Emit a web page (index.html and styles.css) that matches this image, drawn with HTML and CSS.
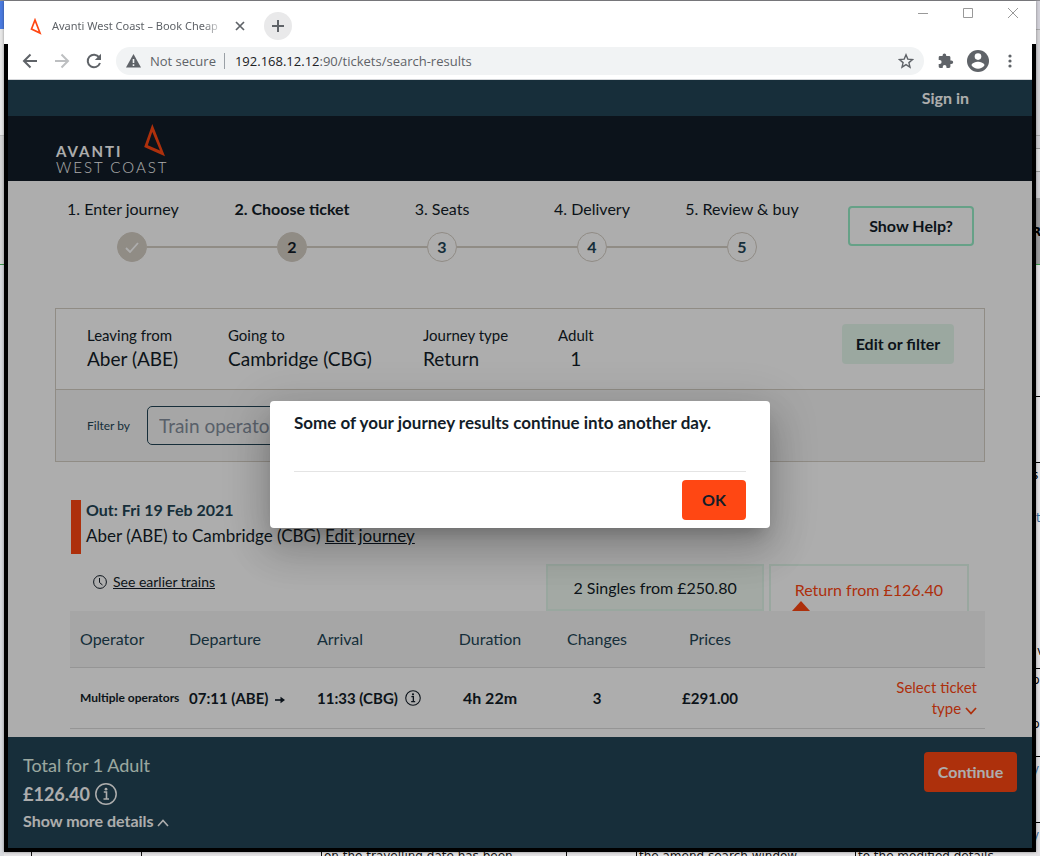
FILE: index.html
```html
<!DOCTYPE html>
<html lang="en">
<head>
<meta charset="utf-8">
<title>Avanti West Coast – Book Cheap</title>
<link rel="stylesheet" href="styles.css">
</head>
<body>
<div class="desktop-doc" aria-hidden="true">
  <div class="edge edge-left"></div>
  <div class="edge edge-right">
    <span class="bit b1">R</span><span class="bit b2">s</span><span class="bit b3">t</span><span class="bit b4">v</span><span class="bit b5">p</span><span class="bit b6">p</span><span class="bit b7">y</span><span class="bit b8">y</span>
  </div>
  <div class="doc-row">
    <span class="c1"></span><span class="c2"></span><span class="c3">on the travelling date has been</span><span class="c4"></span><span class="c5">the amend search window</span><span class="c6">to the modified details</span>
  </div>
</div>

<div class="window">
  <div class="titlebar">
    <div class="tab">
      <svg class="fav" viewBox="0 0 12 17"><path d="M5 2 1.5 11 10 15z" fill="none" stroke="#ff4713" stroke-width="1.7"/></svg>
      <span class="tab-title">Avanti West Coast – Book Cheap</span>
      <button class="plain" aria-label="Close tab"><svg width="10" height="10" viewBox="0 0 10 10"><path d="M1 1l8 8M9 1 1 9" stroke="#5f6368" stroke-width="1.7"/></svg></button>
    </div>
    <button class="new-tab" aria-label="New tab"><svg width="12" height="12" viewBox="0 0 12 12"><path d="M6 0v12M0 6h12" stroke="#5f6368" stroke-width="2"/></svg></button>
    <div class="win-controls">
      <button class="plain" aria-label="Minimise"><svg width="10" height="10" viewBox="0 0 10 10"><path d="M0 5.5h10" stroke="#999"/></svg></button>
      <button class="plain" aria-label="Maximise"><svg width="10" height="10" viewBox="0 0 10 10"><path d="M.5.5h9v9h-9z" fill="none" stroke="#999"/></svg></button>
      <button class="plain" aria-label="Close"><svg width="10" height="10" viewBox="0 0 10 10"><path d="M0 0l10 10M10 0 0 10" stroke="#999"/></svg></button>
    </div>
  </div>

  <div class="frame">
    <div class="toolbar">
      <button class="plain" aria-label="Back"><svg width="16" height="16" viewBox="0 0 16 16"><path d="M15 8H2M8.500 1.500 2 8l6.500 6.500" fill="none" stroke="#5f6368" stroke-width="2"/></svg></button>
      <button class="plain" aria-label="Forward"><svg width="16" height="16" viewBox="0 0 16 16"><path d="M1 8h13M7.500 1.500 14 8l-6.500 6.500" fill="none" stroke="#bdbfc1" stroke-width="2"/></svg></button>
      <button class="plain" aria-label="Reload"><svg width="16" height="16" viewBox="0 0 16 16"><path d="M13.200 4.300A6.300 6.300 0 1 0 14 10" fill="none" stroke="#5f6368" stroke-width="2"/><path d="M15 .800V7H8.800z" fill="#5f6368"/></svg></button>
      <div class="address">
        <svg width="15" height="14" viewBox="0 0 15 14"><path d="M7.500 0 15 13.500H0z" fill="#5f6368"/><path d="M7.500 5v4M7.500 10.300v1.700" stroke="#f1f3f4" stroke-width="1.600"/></svg>
        <span class="secure">Not secure</span>
        <span class="url"><b>192.168.12.12</b>:90/tickets/search-results</span>
        <svg class="star" width="16" height="16" viewBox="0 0 16 16"><path d="M8 1.800l1.800 4.300 4.700.4-3.600 3.100 1.100 4.600L8 11.700l-4 2.500 1.100-4.600L1.500 6.500l4.700-.4z" fill="none" stroke="#5f6368" stroke-width="1.400"/></svg>
      </div>
      <svg class="puzzle" width="16" height="16" viewBox="0 0 16 16"><path d="M13.400 7.400h-1V4.500c0-.8-.6-1.400-1.400-1.400H8.200V2.200a1.800 1.800 0 0 0-3.600 0v.9H2C1.200 3.100.7 3.700.7 4.500v2.600h1a1.900 1.900 0 0 1 0 3.800h-1v2.700c0 .8.500 1.400 1.300 1.400h2.700v-1a1.900 1.900 0 0 1 3.800 0v1H11c.8 0 1.400-.6 1.400-1.400V11h1a1.800 1.800 0 0 0 0-3.600z" fill="#5f6368"/></svg>
      <svg width="22" height="22" viewBox="0 0 22 22"><circle cx="11" cy="11" r="11" fill="#5f6368"/><circle cx="11" cy="6.600" r="3.300" fill="#fff"/><path d="M4.500 15.200c0-2.300 4.300-3.500 6.500-3.500s6.500 1.200 6.500 3.500a7.800 7.800 0 0 1-13 0z" fill="#fff"/></svg>
      <svg class="dots" width="4" height="14" viewBox="0 0 4 14"><g fill="#5f6368"><circle cx="2" cy="2" r="1.600"/><circle cx="2" cy="7" r="1.600"/><circle cx="2" cy="12" r="1.600"/></g></svg>
    </div>

    <div class="page">
      <div class="topbar"><a href="#signin">Sign in</a></div>
      <header class="brand">
        <a class="logo" href="#home">
          <span class="logo-text"><b>AVANTI</b><span>WEST COAST</span></span>
          <svg class="logo-mark" width="24" height="34" viewBox="0 0 24 34"><path d="M9.300 0 1.200 23 22 32.200zM9.300 8 4.800 21.200 17 26.600z" fill="#ff4713" fill-rule="evenodd"/></svg>
        </a>
      </header>

      <main class="content">
        <section class="progress">
          <ol class="steps">
            <li class="first"><span class="label">1. Enter journey</span><span class="rail"><i class="none"></i><span class="dot done"><svg width="14" height="11" viewBox="0 0 14 11"><path d="M1 6l4 4 8-9" fill="none" stroke="#fff" stroke-width="1.800"/></svg></span><i></i></span></li>
            <li class="current"><span class="label">2. Choose ticket</span><span class="rail"><i></i><span class="dot done">2</span><i></i></span></li>
            <li><span class="label">3. Seats</span><span class="rail"><i></i><span class="dot">3</span><i></i></span></li>
            <li><span class="label">4. Delivery</span><span class="rail"><i></i><span class="dot">4</span><i></i></span></li>
            <li><span class="label">5. Review &amp; buy</span><span class="rail"><i></i><span class="dot">5</span><i class="none"></i></span></li>
          </ol>
          <button class="help">Show Help?</button>
        </section>

        <section class="summary">
          <div class="trip">
            <dl>
              <div><dt>Leaving from</dt><dd>Aber (ABE)</dd></div>
              <div><dt>Going to</dt><dd>Cambridge (CBG)</dd></div>
              <div><dt>Journey type</dt><dd>Return</dd></div>
              <div class="adult"><dt>Adult</dt><dd>1</dd></div>
            </dl>
            <button class="edit">Edit or filter</button>
          </div>
          <div class="filter">
            <label for="operator">Filter by</label>
            <input id="operator" type="text" placeholder="Train operator">
          </div>
        </section>

        <section class="results">
          <div class="leg">
            <h2>Out: Fri 19 Feb 2021</h2>
            <p>Aber (ABE) to Cambridge (CBG) <a href="#edit">Edit journey</a></p>
          </div>
          <div class="options">
            <a class="earlier" href="#earlier"><svg width="14" height="14" viewBox="0 0 14 14"><circle cx="7" cy="7" r="6.400" fill="none" stroke="#131d28"/><path d="M6.500 3v4.500L9.500 10" fill="none" stroke="#131d28"/></svg><span>See earlier trains</span></a>
            <div class="fare-tabs">
              <button class="fare">2 Singles from £250.80</button>
              <button class="fare active">Return from £126.40</button>
            </div>
          </div>
          <table>
            <colgroup><col class="w-op"><col class="w-dep"><col class="w-arr"><col class="w-dur"><col class="w-chg"><col class="w-price"><col></colgroup>
            <thead><tr><th>Operator</th><th>Departure</th><th>Arrival</th><th class="mid">Duration</th><th class="mid">Changes</th><th class="mid">Prices</th><th></th></tr></thead>
            <tbody><tr>
              <td class="op">Multiple operators</td>
              <td>07:11 (ABE) <svg class="arrow" width="10" height="8" viewBox="0 0 10 8"><path d="M0 4h7" stroke="#131d28" stroke-width="1.600"/><path d="M5.500.800 10 4 5.500 7.200z" fill="#131d28"/></svg></td>
              <td>11:33 (CBG) <svg class="info" width="16" height="16" viewBox="0 0 22 22"><circle cx="11" cy="11" r="10" fill="none" stroke="#131d28" stroke-width="1.500"/><path d="M8.800 9h2.700v6.500M8.500 16h5.500" fill="none" stroke="#131d28" stroke-width="1.800"/><circle cx="11" cy="6" r="1.500" fill="#131d28"/></svg></td>
              <td class="mid dur">4h 22m</td><td class="mid">3</td><td class="mid">£291.00</td>
              <td class="pick"><a href="#select">Select ticket<br>type <svg width="12" height="8" viewBox="0 0 12 8"><path d="M1 1l5 5.500L11 1" fill="none" stroke="#ff4713" stroke-width="1.800"/></svg></a></td>
            </tr></tbody>
          </table>
        </section>
      </main>

      <footer class="basket">
        <div>
          <p class="who">Total for 1 Adult</p>
          <p class="sum">£126.40 <svg width="22" height="22" viewBox="0 0 22 22"><circle cx="11" cy="11" r="10.200" fill="none" stroke="#fff" stroke-width="1.500"/><path d="M8.800 9h2.700v6.500M8.500 16h5.500" fill="none" stroke="#fff" stroke-width="1.600"/><circle cx="11" cy="6.200" r="1.400" fill="#fff"/></svg></p>
          <a class="more" href="#details">Show more details <svg width="12" height="8" viewBox="0 0 12 8"><path d="M1 7l5-5.500L11 7" fill="none" stroke="#fff" stroke-width="1.600"/></svg></a>
        </div>
        <button class="continue">Continue</button>
      </footer>

      <div class="overlay">
        <div class="modal" role="dialog" aria-modal="true" aria-labelledby="msg">
          <p id="msg">Some of your journey results continue into another day.</p>
          <div class="actions"><button>OK</button></div>
        </div>
      </div>
    </div>
  </div>
</div>
</body>
</html>
```
FILE: styles.css
```css
* { box-sizing: border-box; }
html, body { height: 100%; }
body { margin: 0; background: #e4e3e5; overflow: hidden; font: 16px/24px Lato, "Liberation Sans", sans-serif; color: #131d28; }
button, input { font: inherit; color: inherit; }
button { border: 0; margin: 0; cursor: pointer; }
a { color: inherit; }
p, h2, dl, dd, ol { margin: 0; padding: 0; }
svg { flex: none; }
.plain { background: none; padding: 0; display: flex; }

/* document window lying behind the browser */
.desktop-doc { position: absolute; inset: 0; border-top: 1px solid #8c8c90; }
.edge { position: absolute; top: 0; bottom: 0; width: 4px; }
.edge-left { left: 0; background: linear-gradient(#4b7be0 28px, #e8e8e8 28px 134px, #c0c0c0 134px 135px, #d4d4d4 135px 263px, #3c9a4c 263px 264px, #d8dade 264px); }
.edge-right { right: 0; overflow: hidden; background: linear-gradient(#d2d1d9 28px, #aaa 28px 29px, #d4d3d6 29px 134px, #aaa 134px 135px, #cfced2 135px 147px, #999 147px 148px, #dedddf 148px 170px, #999 170px 171px, #cfced2 171px 197px, #9c9c9e 197px 263px, #3c9a4c 263px 264px, #e2e0e3 264px 395px, #000 395px 396px, #e2e0e3 396px 461px, #000 461px 462px, #e2e0e3 462px 667px, #000 667px 668px, #e2e0e3 668px 755px, #000 755px 756px, #e2e0e3 756px 821px, #000 821px 822px, #e2e0e3 822px); }
.bit { position: absolute; left: -4px; font: 12px/16px "DejaVu Sans", sans-serif; color: #000; }
.b1 { top: 223px; font-weight: 700; } .b2 { top: 466px; } .b3 { top: 509px; left: 0; color: #3b6c9c; } .b4 { top: 642px; left: 1px; }
.b5 { top: 671px; } .b6 { top: 715px; } .b7 { top: 760px; color: #3b6c9c; } .b8 { top: 826px; color: #3b6c9c; }
.doc-row { position: absolute; left: 31px; right: 0; bottom: 0; height: 6px; display: flex; overflow: hidden; font: 12px/12px "DejaVu Sans", sans-serif; color: #111; white-space: nowrap; }
.doc-row span { border-left: 1px solid #111; height: 16px; padding-left: 2px; }
.c1 { width: 110px; } .c2 { width: 180px; } .c3 { width: 245px; } .c4 { width: 70px; } .c5 { width: 219px; } .c6 { flex: 1; }

/* browser window */
.window { position: relative; height: calc(100% - 5px); margin: 1px 4px 4px; display: flex; flex-direction: column; background: #fff; box-shadow: 0 0 3px rgba(0,0,0,.4); font-family: "Open Sans", sans-serif; }
.titlebar { height: 43px; flex: none; display: flex; padding-left: 26px; }
.tab { display: flex; align-items: center; height: 50px; }
.fav { width: 12px; height: 17px; margin-right: 10px; }
.tab-title { width: 172px; margin-right: 11px; overflow: hidden; white-space: nowrap; font-size: 12px; line-height: 20px; font-family: "Noto Sans", sans-serif; font-size: 11px; color: #5f6368; -webkit-mask-image: linear-gradient(90deg, #000 88%, transparent); mask-image: linear-gradient(90deg, #000 88%, transparent); }
.new-tab { width: 28px; height: 28px; margin: 11px 0 0 19px; padding: 0; border-radius: 50%; background: #e9e9ea; display: grid; place-items: center; }
.win-controls { margin-left: auto; display: flex; gap: 35px; padding: 7px 18px 0 0; }
.win-controls .plain { height: 10px; }
.frame { flex: 1; min-height: 0; display: flex; flex-direction: column; border: 4px solid #000; border-top: 0; }
.toolbar { height: 36px; flex: none; display: flex; align-items: center; gap: 16px; padding: 0 20px 2px 14px; border-bottom: 1px solid #d5d7da; background: #fff; }
.address { flex: 1; height: 28px; margin-left: -2px; padding: 0 10px; border-radius: 14px; background: #f1f3f4; display: flex; align-items: center; font-size: 13px; line-height: 20px; color: #5f6368; }
.secure { margin: 0 10px 0 9px; padding-right: 8px; border-right: 1px solid #9aa0a6; line-height: 16px; }
.url b { font-weight: 400; color: #202124; }
.star { margin-left: auto; }
.puzzle { margin-left: -2px; }
.toolbar .puzzle + svg { margin-left: -3px; }
.dots { margin-left: 3px; }

/* site */
.page { position: relative; flex: 1; min-height: 0; display: flex; flex-direction: column; background: #fff; font-family: Lato, "Liberation Sans", sans-serif; }
.topbar { flex: none; height: 36px; padding: 6px 63px; background: #234556; color: #fff; text-align: right; }
.topbar a { font-weight: 700; text-decoration: none; }
.brand { flex: none; height: 65px; padding: 8px 48px; background: #131d28; }
.logo { display: inline-flex; color: #fff; text-decoration: none; }
.logo-text { display: grid; padding-top: 19px; line-height: 16px; }
.logo-text b { font-size: 15px; letter-spacing: 2px; }
.logo-text span { font-size: 15px; font-weight: 300; letter-spacing: 2px; }
.logo-mark { margin-left: -25px; }
.content { flex: 1; min-height: 0; overflow: hidden; padding: 16px 47px 0; }
.progress { display: flex; align-items: flex-start; padding: 0 11px 0 2px; height: 111px; }
.steps { flex: 1; display: grid; grid-template-columns: 160fr repeat(4, 150fr); list-style: none; text-align: center; margin-right: 31px; }
.label { display: block; white-space: nowrap; }
.first .label { text-align: left; padding-left: 10px; }
.current { font-weight: 700; }
.rail { display: flex; align-items: center; margin-top: 11px; }
.rail i { flex: 1; height: 2px; background: #d5cec4; }
.rail .none { background: none; }
.first .none { flex: 6; } .first .none ~ i { flex: 7; }
.dot { width: 30px; height: 30px; display: grid; place-items: center; border: 1px solid #d5cec4; border-radius: 50%; font-weight: 700; color: #234556; }
.dot.done { background: #d5cec4; color: #131d28; }
.help { margin-top: 9px; width: 126px; height: 40px; border: 2px solid #97edc8; border-radius: 4px; background: #fff; font-weight: 700; }
.summary { border: 1px solid #d5cec4; }
.trip { display: flex; justify-content: space-between; align-items: flex-start; padding: 15px 30px 15px 31px; height: 80px; }
.trip dl { display: grid; grid-template-columns: 141px 195px 135px auto; }
.trip dt { font-size: 15px; line-height: 22px; }
.trip dd { font-size: 19px; line-height: 26px; }
.adult { text-align: center; }
.edit { width: 112px; height: 40px; border-radius: 4px; background: #e5f8ec; font-weight: 700; padding: 0; }
.filter { display: flex; align-items: center; gap: 17px; height: 72px; padding-left: 31px; border-top: 1px solid #d5cec4; background: #f5f5f5; font-size: 12px; color: #234556; }
.filter input { width: 300px; height: 39px; padding: 0 11px; border: 1px solid #234556; border-radius: 5px; background: transparent; font-size: 19px; }
.filter input::placeholder { color: #848e9c; opacity: 1; }
.results { padding: 38px 0 0 15px; }
.leg { margin-left: 1px; padding-left: 5px; border-left: 10px solid #ff4713; height: 54px; }
.leg h2 { font-size: 16px; line-height: 20px; color: #234556; }
.leg p { font-size: 17px; line-height: 32px; }
.options { display: flex; justify-content: space-between; padding: 10px 16px 0 23px; }
.earlier { display: flex; align-items: center; gap: 6px; height: 36px; font-size: 14px; text-decoration: none; }
.earlier span { text-decoration: underline; }
.fare-tabs { display: flex; gap: 5px; }
.fare { position: relative; height: 47px; padding: 0 25px; background: #f0faf2; border: 2px solid #e2f7ea; }
.fare.active { padding: 2px 24px 0; background: #fff; border-bottom: 0; color: #ff4713; }
.fare.active::after { content: ""; position: absolute; left: 21px; bottom: 0; border: 9px solid transparent; border-top: 0; border-bottom: 10px solid #ff4713; }
table { width: 100%; table-layout: fixed; border-collapse: collapse; }
.w-op { width: 109px; } .w-dep { width: 128px; } .w-arr { width: 123px; } .w-dur { width: 120px; } .w-chg { width: 94px; } .w-price { width: 132px; }
th, td { padding: 0 0 0 10px; text-align: left; white-space: nowrap; border-bottom: 1px solid #dcdcdc; }
th { height: 56px; font-weight: 400; color: #234556; background: #f5f5f5; }
td { height: 61px; font-size: 15px; font-weight: 700; }
.mid { text-align: center; padding: 0; }
.dur { font-size: 16px; }
.op { font-size: 12px; }
.arrow { margin-left: 3px; }
.info { margin-left: 3px; vertical-align: -2px; }
.pick { padding-right: 8px; text-align: right; line-height: 21px; font-weight: 400; color: #ff4713; }
.pick a { text-decoration: none; }
.pick svg { vertical-align: -1px; }
.basket { flex: none; height: 111px; display: flex; justify-content: space-between; align-items: flex-start; padding: 15px 15px 0; background: #234556; color: #fff; }
.who { font-size: 18px; line-height: 26px; color: #e5f8ec; }
.sum { display: flex; align-items: center; gap: 5px; font-size: 18px; line-height: 32px; font-weight: 700; }
.more { display: block; font-weight: 700; text-decoration: none; line-height: 22px; }
.continue { width: 93px; height: 40px; border-radius: 4px; background: #ff4713; font-weight: 700; padding: 0; }

.overlay { position: absolute; inset: 0; display: grid; place-items: center; background: rgba(0,0,0,.32); }
.modal { width: 500px; padding: 10px 24px 8px; border-radius: 4px; background: #fff; box-shadow: 0 11px 15px -7px rgba(0,0,0,.2), 0 24px 38px 3px rgba(0,0,0,.14), 0 9px 46px 8px rgba(0,0,0,.12); font-weight: 700; }
.modal p { padding-bottom: 36px; border-bottom: 1px solid #e4e4e4; font-size: 17px; }
.actions { display: flex; justify-content: flex-end; padding-top: 8px; }
.actions button { width: 64px; height: 40px; border-radius: 4px; background: #ff4713; font-weight: 700; }
```
